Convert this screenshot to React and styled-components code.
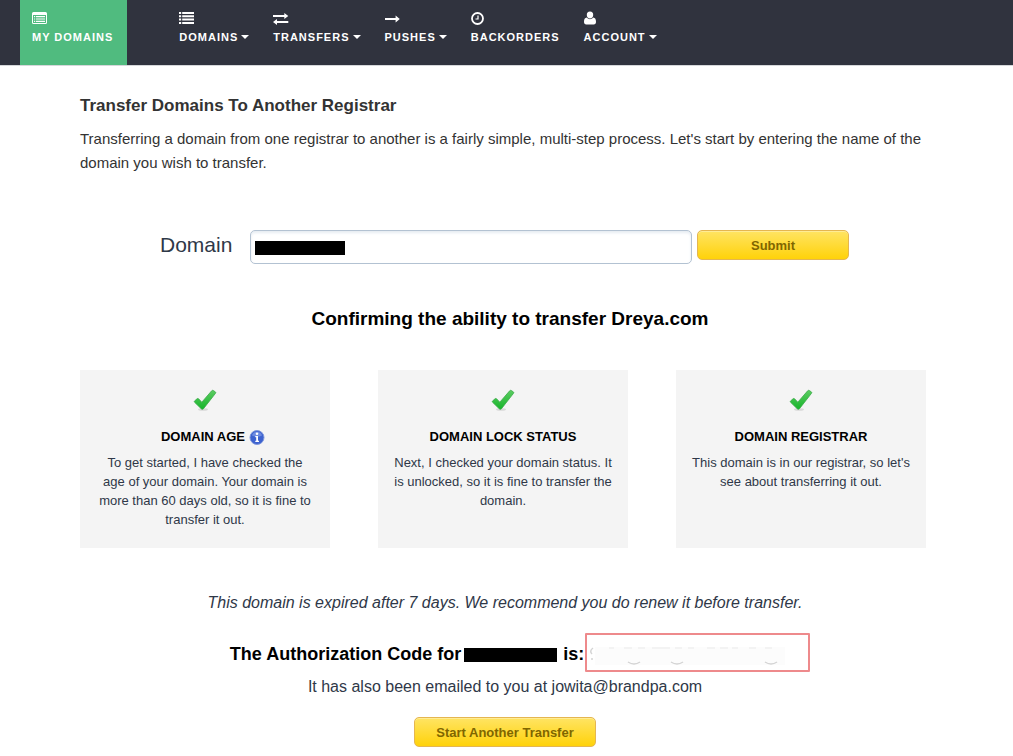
import React, { useState } from 'react';
import styled, { createGlobalStyle } from 'styled-components';

const GlobalStyle = createGlobalStyle`
  *, *::before, *::after { box-sizing: border-box; }
  body {
    margin: 0;
    background: #fff;
    color: #333;
    font-family: "Liberation Sans", Arial, sans-serif;
  }
  h1, h2, h3, p { margin: 0; }
`;

const NavBar = styled.nav`
  display: flex;
  height: 66px;
  padding-left: 20px;
  border-bottom: 1px solid #d5d7da;
  background: #30333e;
`;

const NavLink = styled.a`
  display: flex;
  flex-direction: column;
  gap: 2px;
  padding: 11px ${(p) => (p.$active ? '14px' : '12px')} 0 12px;
  margin-right: ${(p) => (p.$active ? '40px' : '0')};
  background: ${(p) => (p.$active ? '#50bb7f' : 'transparent')};
  color: #fff;
  font-size: 11px;
  font-weight: bold;
  line-height: 20px;
  letter-spacing: 1px;
  white-space: nowrap;
  text-decoration: none;
  text-transform: uppercase;
`;

const NavIcon = styled.svg`
  display: block;
  width: 16px;
  height: 14px;
  fill: #fff;
`;

const Caret = styled.span`
  display: inline-block;
  margin-left: 3px;
  vertical-align: 2px;
  border: 4px solid transparent;
  border-top-color: #fff;
  border-bottom: 0;
`;

const Main = styled.main`
  padding: 28px 87px 8px 80px;
`;

const Title = styled.h1`
  font-size: 17px;
  line-height: 24px;
`;

const Intro = styled.p`
  margin-top: 9px;
  font-size: 15px;
  line-height: 24px;
`;

const Form = styled.form`
  display: flex;
  align-items: flex-start;
  margin-top: 55px;
  padding: 0 77px 0 80px;
`;

const FieldLabel = styled.label`
  width: 90px;
  color: #2f3848;
  font-size: 21px;
  line-height: 30px;
`;

const Field = styled.div`
  position: relative;
  flex: 1;
  height: 34px;
  margin-right: 5px;
`;

const TextInput = styled.input`
  display: block;
  width: 100%;
  height: 34px;
  padding: 4px 8px;
  border: 1px solid #b3c2d2;
  border-radius: 5px;
  background: #fff;
  box-shadow: inset 0 2px 3px #e6ecf2;
  font: 16px "Liberation Sans", Arial, sans-serif;
`;

const FieldMask = styled.span`
  position: absolute;
  top: 11px;
  left: 5px;
  width: 90px;
  height: 14px;
  background: #000;
`;

const Button = styled.button`
  width: ${(p) => (p.$wide ? '182px' : '152px')};
  height: 30px;
  padding: 0;
  border: 1px solid #e5b650;
  border-radius: 5px;
  background: linear-gradient(#ffe463, #ffd20a);
  box-shadow: inset 0 1px 0 #ffec94;
  color: #806600;
  font: bold 13px "Liberation Sans", Arial, sans-serif;
`;

const Heading = styled.h2`
  margin-top: 43px;
  padding-left: 14px;
  color: #000;
  font-size: 19px;
  line-height: 24px;
  text-align: center;
`;

const Cards = styled.section`
  display: grid;
  grid-template-columns: repeat(3, 1fr);
  gap: 48px;
  margin-top: 39px;
`;

const Card = styled.article`
  min-height: 178px;
  padding: 18px 15px;
  background: #f4f4f4;
  text-align: center;
`;

const CheckIcon = styled.svg`
  display: block;
  width: 24px;
  height: 24px;
  margin: 0 auto;
`;

const CardTitle = styled.h3`
  display: flex;
  justify-content: center;
  align-items: center;
  gap: 4px;
  margin-top: 15px;
  padding-left: ${(p) => (p.$info ? '16px' : '0')};
  color: #000;
  font-size: 13px;
  line-height: 20px;
`;

const InfoIcon = styled.svg`
  width: 16px;
  height: 16px;
`;

const CardText = styled.p`
  margin-top: 6px;
  color: #2f3848;
  font-size: 13px;
  line-height: 19px;
`;

const Result = styled.section`
  display: flex;
  flex-direction: column;
  align-items: center;
  margin-top: 43px;
  padding-left: 4px;
  color: #2f3848;
  font-size: 16px;
  line-height: 24px;
  text-align: center;
`;

const Warning = styled.p`
  font-style: italic;
`;

const CodeLine = styled.div`
  display: flex;
  align-items: flex-end;
  margin-top: 18px;
  padding-left: 30px;
  color: #000;
  font-size: 18px;
  font-weight: bold;
`;

const CodeText = styled.span`
  padding-bottom: 6px;
`;

const Redaction = styled.span`
  width: 93px;
  height: 14px;
  margin: 0 6px 10px 3px;
  background: #000;
`;

const CodeBox = styled.div`
  width: 225px;
  height: 39px;
  margin-left: 1px;
  border: 2px solid #ee8a8c;
  border-radius: 1px;
  background: #fff;
`;

const Traces = styled.svg`
  display: block;
  width: 220px;
  height: 35px;
`;

const Emailed = styled.p`
  margin-top: 3px;
  margin-bottom: 18px;
`;

const icons = {
  card: (
    <path fillRule="evenodd" d="M1.5 1h12A1.5 1.5 0 0 1 15 2.500v9a1.500 1.500 0 0 1-1.500 1.500h-12A1.500 1.500 0 0 1 0 11.500v-9A1.500 1.500 0 0 1 1.500 1zM1 4v7.500q0 .5.5.5h12q.5 0 .5-.5V4zM2 5h1.200v1.200H2zM4 5h9v1.200H4zM2 7.400h1.200v1.200H2zM4 7.400h9v1.200H4zM2 9.800h1.200V11H2zM4 9.800h9V11H4z" />
  ),
  list: (
    <path d="M0 1h2.200v2H0zM3.200 1H15v2H3.200zM0 4.300h2.200v2H0zM3.200 4.300H15v2H3.200zM0 7.600h2.200v2H0zM3.200 7.600H15v2H3.200zM0 10.900h2.200v2H0zM3.200 10.900H15v2H3.200z" />
  ),
  exchange: (
    <path d="M0 3.900h11.300V1.900L15.300 4.900l-4 3V5.900H0zM15.300 9.900H4V7.900L0 10.900l4 3v-2h11.300z" />
  ),
  arrow: <path d="M0 7h10.600V4.500L14.800 8l-4.200 3.500V9H0z" />,
  clock: (
    <g fill="none" stroke="#fff">
      <circle cx="6.500" cy="7.500" r="5.500" strokeWidth="1.800" />
      <path d="M7 4.500V8H4.500" strokeWidth="1.200" />
    </g>
  ),
  user: (
    <path d="M6 .5a3.300 3.300 0 0 1 3.200 3.400C9.200 6 7.800 7.500 6 7.500S2.800 6 2.800 3.900A3.300 3.300 0 0 1 6 .5zM2.900 6.500C3.700 7.600 4.700 8.200 6 8.200s2.300-.6 3.100-1.700c2.200.1 2.900 2 2.900 4.200 0 1.700-.8 2.800-2.300 2.800H2.300C.8 13.500 0 12.400 0 10.700c0-2.200.7-4.100 2.900-4.200z" />
  ),
};

const navItems = [
  { label: 'My Domains', icon: 'card', active: true },
  { label: 'Domains', icon: 'list', menu: true },
  { label: 'Transfers', icon: 'exchange', menu: true },
  { label: 'Pushes', icon: 'arrow', menu: true },
  { label: 'Backorders', icon: 'clock' },
  { label: 'Account', icon: 'user', menu: true },
];

const checks = [
  {
    title: 'DOMAIN AGE',
    info: true,
    text: 'To get started, I have checked the age of your domain. Your domain is more than 60 days old, so it is fine to transfer it out.',
  },
  {
    title: 'DOMAIN LOCK STATUS',
    text: 'Next, I checked your domain status. It is unlocked, so it is fine to transfer the domain.',
  },
  {
    title: 'DOMAIN REGISTRAR',
    text: "This domain is in our registrar, so let's see about transferring it out.",
  },
];

function Check() {
  return (
    <CheckIcon viewBox="0 0 24 24" aria-hidden="true">
      <defs>
        <linearGradient id="check-fill" x1="0" y1="0" x2="0" y2="1">
          <stop offset="0" stopColor="#5ccc62" />
          <stop offset="1" stopColor="#16b52a" />
        </linearGradient>
      </defs>
      <ellipse cx="10" cy="21.500" rx="5" ry="1.300" fill="#d8d8d8" />
      <path
        d="M1.500 13 4.300 10.600Q5 10.200 5.600 10.800L8.800 14.200 18.700 2.800Q19.500 2 20.300 2.500L22.500 4Q23 4.600 22.500 5.300L10.500 20.700Q9.300 21.800 8.200 20.700L1.600 14.300Q1 13.600 1.500 13Z"
        fill="url(#check-fill)"
        stroke="#3aa947"
        strokeWidth=".8"
      />
    </CheckIcon>
  );
}

function Info() {
  return (
    <InfoIcon viewBox="0 0 16 16" aria-hidden="true">
      <circle cx="8" cy="8.500" r="7" fill="#3d62cf" stroke="#8098dc" />
      <path d="M3 6.500a5.200 5.200 0 0 1 10 0Q8 9 3 6.500z" fill="#6d8be0" />
      <circle cx="8" cy="4.800" r="1.300" fill="#fff" />
      <path d="M6.300 7H9v4.700h1V13H6.300v-1.300h.9V8.300h-.9z" fill="#fff" />
    </InfoIcon>
  );
}

export default function App() {
  const [domain, setDomain] = useState('');
  return (
    <>
      <GlobalStyle />
      <NavBar>
        {navItems.map((item) => (
          <NavLink key={item.label} href="#" $active={item.active}>
            <NavIcon viewBox="0 0 16 14" aria-hidden="true">{icons[item.icon]}</NavIcon>
            <span>
              {item.label}
              {item.menu && <Caret />}
            </span>
          </NavLink>
        ))}
      </NavBar>
      <Main>
        <Title>Transfer Domains To Another Registrar</Title>
        <Intro>
          Transferring a domain from one registrar to another is a fairly simple, multi-step process.
          Let's start by entering the name of the domain you wish to transfer.
        </Intro>
        <Form onSubmit={(e) => e.preventDefault()}>
          <FieldLabel htmlFor="domain">Domain</FieldLabel>
          <Field>
            <TextInput id="domain" type="text" value={domain} onChange={(e) => setDomain(e.target.value)} />
            <FieldMask />
          </Field>
          <Button type="submit">Submit</Button>
        </Form>
        <Heading>Confirming the ability to transfer Dreya.com</Heading>
        <Cards>
          {checks.map((c) => (
            <Card key={c.title}>
              <Check />
              <CardTitle $info={c.info}>
                {c.title}
                {c.info && <Info />}
              </CardTitle>
              <CardText>{c.text}</CardText>
            </Card>
          ))}
        </Cards>
        <Result>
          <Warning>This domain is expired after 7 days. We recommend you do renew it before transfer.</Warning>
          <CodeLine>
            <CodeText>The Authorization Code for</CodeText>
            <Redaction />
            <CodeText>is:</CodeText>
            <CodeBox>
              <Traces viewBox="0 0 220 35" aria-hidden="true">
                <rect x="8" y="12" width="190" height="18" fill="#fcfcfc" />
                <g fill="none" stroke="#d4d4d4" strokeWidth="1.500">
                  <path d="M6 13q-4 3-1 6M4 24h2" />
                  <path d="M41 27q6 4 12 0M84 27q6 4 12 0M178 27q6 4 12 0" />
                </g>
                <path d="M22 13h5M37 13h8M51 13h7M65 13h18M88 13h7M101 13h6M120 13h8M133 13h8M145 13h6M162 13h7M178 13h7" stroke="#eaeaea" />
              </Traces>
            </CodeBox>
          </CodeLine>
          <Emailed>It has also been emailed to you at jowita@brandpa.com</Emailed>
          <Button type="button" $wide>Start Another Transfer</Button>
        </Result>
      </Main>
    </>
  );
}
